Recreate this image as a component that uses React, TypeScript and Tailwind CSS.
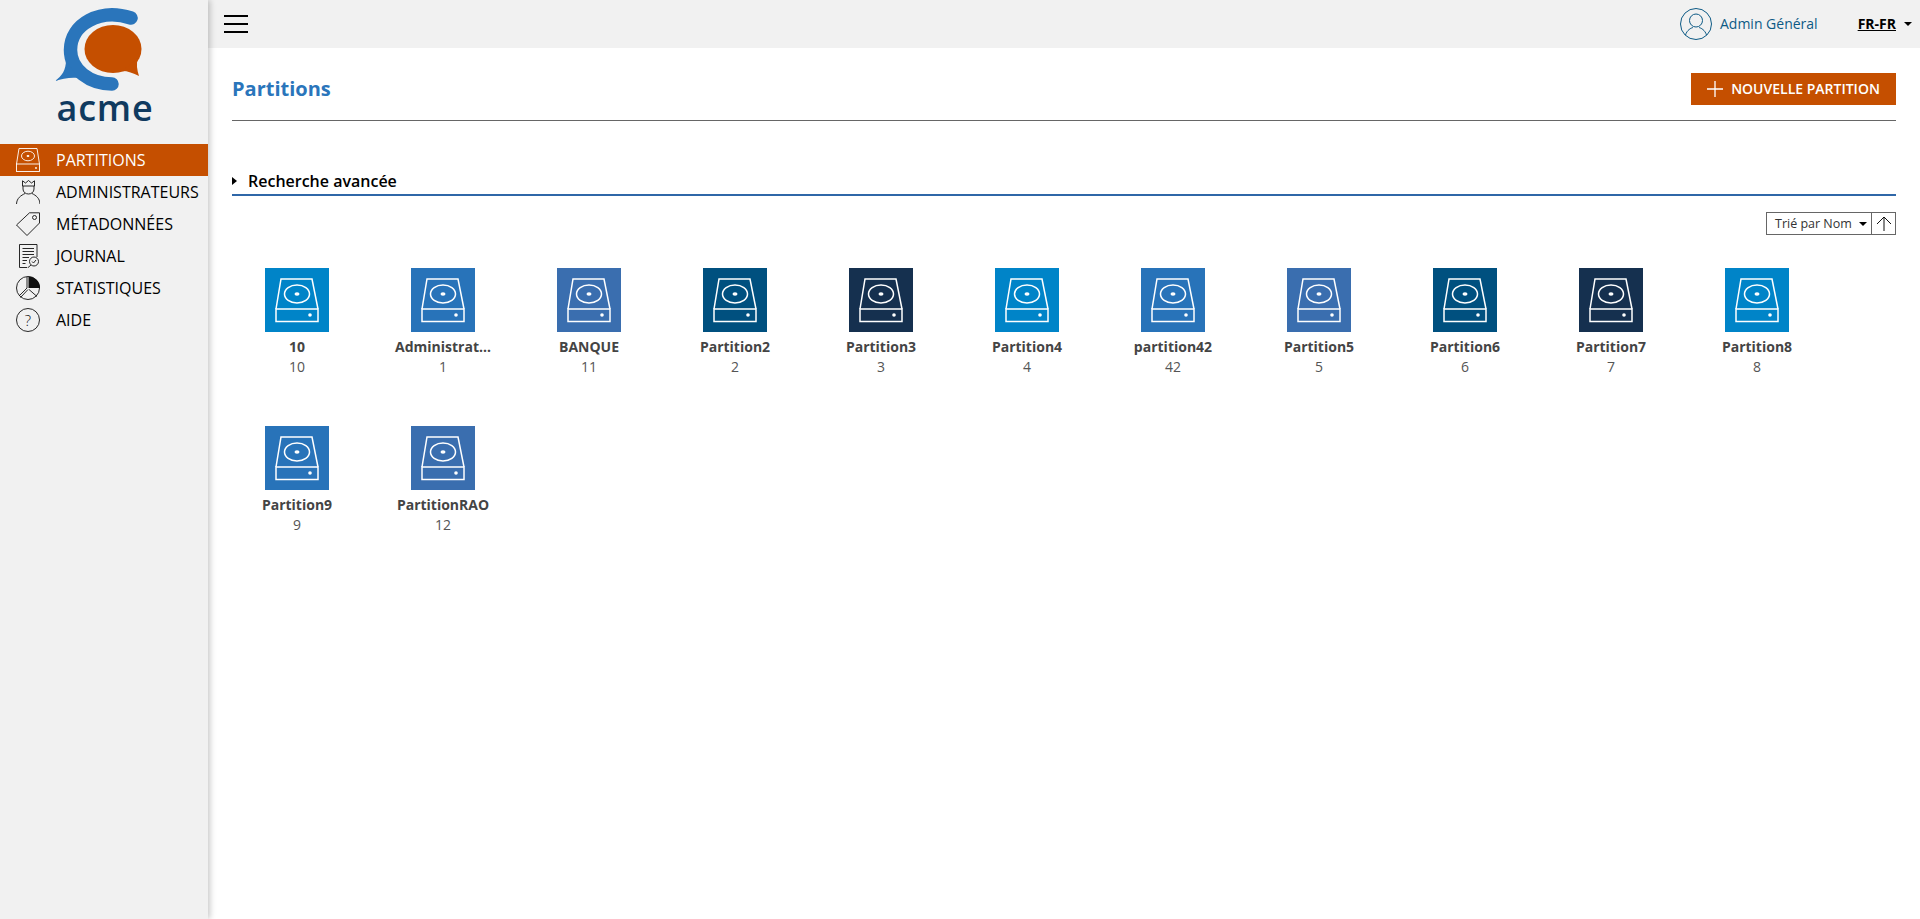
const partitions = [
  { name: "10", num: "10", color: "bg-[#0084c8]" },
  { name: "Administrat…", num: "1", color: "bg-[#2873b9]" },
  { name: "BANQUE", num: "11", color: "bg-[#3a6eaf]" },
  { name: "Partition2", num: "2", color: "bg-[#00507f]" },
  { name: "Partition3", num: "3", color: "bg-[#15304f]" },
  { name: "Partition4", num: "4", color: "bg-[#0084c8]" },
  { name: "partition42", num: "42", color: "bg-[#2873b9]" },
  { name: "Partition5", num: "5", color: "bg-[#3a6eaf]" },
  { name: "Partition6", num: "6", color: "bg-[#00507f]" },
  { name: "Partition7", num: "7", color: "bg-[#15304f]" },
  { name: "Partition8", num: "8", color: "bg-[#0084c8]" },
  { name: "Partition9", num: "9", color: "bg-[#2873b9]" },
  { name: "PartitionRAO", num: "12", color: "bg-[#3a6eaf]" },
];

const Logo = () => (
  <svg width="208" height="94" viewBox="0 0 208 94" className="block">
    <path d="M131 18C100 8 70.5 24 70.5 50C70.5 70 90 84 112 84" fill="none" stroke="#2a75bb" strokeWidth="13.5" strokeLinecap="round" />
    <path d="M66 60C66 70 62 76 55 81C62 79 70 77 78 78Z" fill="#2a75bb" />
    <ellipse cx="113" cy="49" rx="28.5" ry="24" fill="#c54f00" />
    <path d="M122 71C128 71 133 73 139 76C137 70 136 64 138 58Z" fill="#c54f00" />
  </svg>
);

const HddIcon = () => (
  <svg width="64" height="64" viewBox="0 0 64 64" fill="none" stroke="#fff" strokeWidth="1.5">
    <path d="M11 41L16 11H47L53 41" />
    <rect x="11" y="41" width="42" height="12.5" />
    <ellipse cx="32" cy="26" rx="12.5" ry="9" />
    <ellipse cx="32" cy="26" rx="2.5" ry="1.8" fill="#fff" stroke="none" />
    <circle cx="45" cy="47" r="1.8" fill="#fff" stroke="none" />
  </svg>
);

const NavHdd = () => (
  <svg width="24" height="24" viewBox="0 0 24 24" fill="none" stroke="#fff" strokeWidth="0.9">
    <path d="M0.5 16L3 0.5H21L23.5 16" />
    <rect x="0.5" y="16" width="23" height="7.5" />
    <ellipse cx="12" cy="8" rx="6.5" ry="4.8" />
    <ellipse cx="12" cy="8" rx="1.4" ry="0.9" fill="#fff" stroke="none" />
    <circle cx="20" cy="20" r="0.9" fill="#fff" stroke="none" />
  </svg>
);

const NavAdmin = () => (
  <svg width="24" height="24" viewBox="0 0 24 24" fill="none" stroke="#111" strokeWidth="0.9">
    <path d="M6.5 6V0.8L9.5 3L12.5 0.5L15.5 3L18.5 0.8V6Z" />
    <path d="M7 6V9C7 12 9.5 14 12.5 14C15.5 14 18 12 18 9V6" />
    <path d="M0.5 24C0.8 18 5 15.5 9 13.5M24 24C23.7 18 20 15.5 16 13.5" />
  </svg>
);

const NavTag = () => (
  <svg width="24" height="24" viewBox="0 0 24 24" fill="none" stroke="#111" strokeWidth="0.9">
    <path d="M0.5 13L13.5 0.8H23.5V11L11 23.5Z" />
    <circle cx="18.5" cy="5.5" r="2" />
  </svg>
);

const NavJournal = () => (
  <svg width="24" height="24" viewBox="0 0 24 24" fill="none" stroke="#111" strokeWidth="0.9">
    <path d="M11 23.5H3.5V0.5H21V13" />
    <path d="M6.5 4.5H18M6.5 7.5H18M6.5 10.5H18M6.5 13.5H13M6.5 16.5H11M6.5 19.5H9.5" />
    <circle cx="18" cy="17.5" r="4.5" />
    <path d="M15 21L11.5 24" />
    <path d="M16 17.5L17.5 19L20 16" />
  </svg>
);

const NavStats = () => (
  <svg width="24" height="24" viewBox="0 0 24 24" fill="none" stroke="#111" strokeWidth="0.9">
    <circle cx="12" cy="12" r="11.5" />
    <path d="M12.5 0.5A11.5 11.5 0 0 1 24 12H12.5Z" fill="#111" stroke="none" />
    <path d="M11 1V12L3 20M13 13.5L21 20.5M12 13.5L4.5 21.5" />
  </svg>
);

const NavHelp = () => (
  <svg width="24" height="24" viewBox="0 0 24 24" fill="none" stroke="#111" strokeWidth="0.9">
    <circle cx="12" cy="12" r="11.5" />
    <text x="12" y="17.5" textAnchor="middle" fontSize="15" fontWeight="300" fill="#111" stroke="none" fontFamily="Open Sans">?</text>
  </svg>
);

const menu = [
  { label: "PARTITIONS", icon: <NavHdd />, active: true },
  { label: "ADMINISTRATEURS", icon: <NavAdmin /> },
  { label: "MÉTADONNÉES", icon: <NavTag /> },
  { label: "JOURNAL", icon: <NavJournal /> },
  { label: "STATISTIQUES", icon: <NavStats /> },
  { label: "AIDE", icon: <NavHelp /> },
];

const App = () => {
  return (
    <div className="flex h-screen overflow-hidden bg-white font-['Open_Sans',sans-serif]">
      {/* Sidebar */}
      <aside className="relative z-10 w-[208px] shrink-0 bg-[#f1f1f1] shadow-[2px_0_6px_rgba(0,0,0,0.22)]">
        <div className="h-[144px] flex flex-col items-center">
          <Logo />
          <div className="-mt-[6px] ml-[2px] text-[36px] leading-[40px] font-semibold text-[#0f3a5f] tracking-[0.8px]">acme</div>
        </div>
        <nav>
          {menu.map((item) => (
            <div
              key={item.label}
              className={`h-8 flex items-center gap-4 pl-4 text-base ${item.active ? "bg-[#c54f00] text-white" : "text-black"}`}
            >
              {item.icon}
              <span>{item.label}</span>
            </div>
          ))}
        </nav>
      </aside>

      <div className="flex-1 min-w-0 flex flex-col">
        {/* Top bar */}
        <header className="h-12 shrink-0 bg-[#f1f1f1] flex items-center pl-4 pr-[8px]">
          <div className="flex flex-col gap-[6px] w-6">
            <span className="h-[2px] bg-black" />
            <span className="h-[2px] bg-black" />
            <span className="h-[2px] bg-black" />
          </div>
          <div className="ml-auto flex items-center">
            <svg width="32" height="32" viewBox="0 0 32 32" fill="none" stroke="#0d5a85" strokeWidth="1">
              <circle cx="16" cy="16" r="15.5" />
              <circle cx="16" cy="12.5" r="6.5" />
              <path d="M5.5 27C7 22 11 20 13 19.5M26.5 27C25 22 21 20 19 19.5" />
            </svg>
            <span className="ml-2 text-sm text-[#0d5a85]">Admin Général</span>
            <span className="ml-10 text-sm font-bold underline text-black">FR-FR</span>
            <span className="ml-2 w-0 h-0 border-x-4 border-x-transparent border-t-4 border-t-black" />
          </div>
        </header>

        {/* Content */}
        <main className="flex-1 px-6">
          <div className="h-[73px] pt-[10px] flex items-center justify-between border-b border-[#666]">
            <h1 className="text-xl font-bold text-[#2a75bb]">Partitions</h1>
            <button className="h-8 w-[205px] flex items-center justify-center gap-2 bg-[#c54f00] text-white text-sm font-semibold">
              <svg width="16" height="16" viewBox="0 0 16 16" stroke="#fff" strokeWidth="1.3">
                <path d="M8 0V16M0 8H16" />
              </svg>
              NOUVELLE PARTITION
            </button>
          </div>

          <div className="mt-[48px] h-[27px] pb-[2px] flex items-center border-b-2 border-[#2f67a8]">
            <span className="w-0 h-0 border-y-4 border-y-transparent border-l-[5px] border-l-black" />
            <span className="ml-[11px] text-base font-semibold text-black">Recherche avancée</span>
          </div>

          <div className="mt-4 flex justify-end">
            <div className="h-[23px] flex items-center border border-[#666] text-[12.5px] text-[#333]">
              <div className="w-[105px] h-full flex items-center justify-between pl-2 pr-[4px] pt-[1px] border-r border-[#666]">
                <span>Trié par Nom</span>
                <span className="w-0 h-0 border-x-4 border-x-transparent border-t-4 border-t-black" />
              </div>
              <div className="w-[23px] flex justify-center">
                <svg width="16" height="16" viewBox="0 0 16 16" fill="none" stroke="#111" strokeWidth="1">
                  <path d="M8 15V1M1 8L8 1L15 8" />
                </svg>
              </div>
            </div>
          </div>

          <div className="mt-[33px] -ml-2 flex flex-wrap">
            {partitions.map((p) => (
              <div key={p.name} className="w-[146px] h-[158px] flex flex-col items-center">
                <div className={`w-16 h-16 ${p.color}`}>
                  <HddIcon />
                </div>
                <div className="mt-[5px] w-24 text-center text-sm leading-5 font-bold text-[#444] whitespace-nowrap">{p.name}</div>
                <div className="text-sm leading-5 text-[#555]">{p.num}</div>
              </div>
            ))}
          </div>
        </main>
      </div>
    </div>
  );
};

export default App;
